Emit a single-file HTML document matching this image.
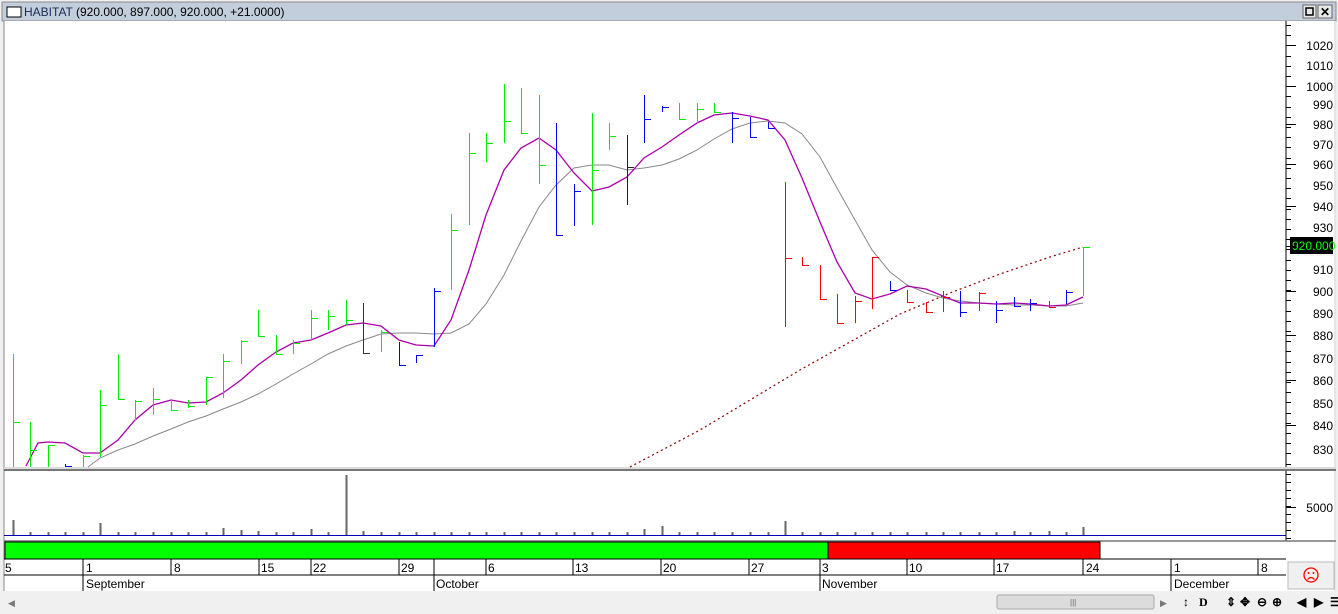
<!DOCTYPE html>
<html><head><meta charset="utf-8"><style>
body{margin:0;width:1338px;height:614px;overflow:hidden;background:#f0f0f0;font-family:"Liberation Sans",sans-serif}
svg{position:absolute;left:0;top:0}
</style></head><body>
<svg id="s" width="1338" height="614" xmlns="http://www.w3.org/2000/svg" font-family="Liberation Sans, sans-serif">
<rect x="0" y="0" width="1338" height="614" fill="#f0f0f0"/>
<rect x="2" y="2" width="1334" height="19" fill="#c2cedb" stroke="#8a8a8a"/>
<rect x="7" y="7" width="14" height="10" fill="#fff" stroke="#000"/>
<text x="24" y="16" font-size="12" fill="#1a2a5a">HABITAT <tspan fill="#000">(920.000, 897.000, 920.000, +21.0000)</tspan></text>
<rect x="1303" y="5" width="13" height="13" fill="#e8e8e8" stroke="#666"/><rect x="1306" y="8" width="7" height="7" fill="none" stroke="#000" stroke-width="1.5"/>
<rect x="1318" y="5" width="14" height="13" fill="#e8e8e8" stroke="#666"/><text x="1320" y="16" font-size="12" font-weight="bold">✕</text>
<rect x="4" y="21" width="1332" height="570" fill="#fff"/>
<line x1="4" y1="21" x2="4" y2="591" stroke="#888"/>
<line x1="1286" y1="21" x2="1286" y2="541" stroke="#000"/>
<line x1="1335" y1="21" x2="1335" y2="591" stroke="#ccc"/>
<rect x="4" y="467" width="1332" height="3" fill="#dcdcdc"/><line x1="4" y1="470" x2="1336" y2="470" stroke="#777" stroke-width="2"/>
<g font-size="12" fill="#000" text-anchor="end">
<text x="1333" y="50">1020</text><text x="1333" y="70">1010</text><text x="1333" y="91">1000</text><text x="1333" y="109">990</text><text x="1333" y="129">980</text><text x="1333" y="149">970</text><text x="1333" y="169">960</text><text x="1333" y="190">950</text><text x="1333" y="211">940</text><text x="1333" y="232">930</text><text x="1333" y="274">910</text><text x="1333" y="296">900</text><text x="1333" y="318">890</text><text x="1333" y="340">880</text><text x="1333" y="363">870</text><text x="1333" y="385">860</text><text x="1333" y="408">850</text><text x="1333" y="430">840</text><text x="1333" y="454">830</text>
<text x="1333" y="512">5000</text>
</g>
<rect x="1290" y="237" width="43" height="17" fill="#000"/><text x="1292" y="250" font-size="12" fill="#00ff00">920.000</text>
<g id="ax" stroke="#000"></g>
<line x1="4" y1="535.5" x2="1286" y2="535.5" stroke="#0000b0"/>
<g id="vol" stroke="#666" stroke-width="2"></g>
<line x1="4" y1="541" x2="1336" y2="541" stroke="#777" stroke-width="1.5"/>
<rect x="5" y="542" width="823" height="17" fill="#00ff00" stroke="#000"/>
<rect x="828" y="542" width="272" height="17" fill="#ff0000" stroke="#000"/>
<line x1="4" y1="559" x2="1286" y2="559" stroke="#000"/><line x1="4" y1="575" x2="1286" y2="575" stroke="#000"/>
<g stroke="#000"><line x1="83" y1="559" x2="83" y2="591"/><line x1="171" y1="559" x2="171" y2="575"/><line x1="259" y1="559" x2="259" y2="575"/><line x1="311" y1="559" x2="311" y2="575"/><line x1="399" y1="559" x2="399" y2="575"/><line x1="434" y1="559" x2="434" y2="591"/><line x1="486" y1="559" x2="486" y2="575"/><line x1="573" y1="559" x2="573" y2="575"/><line x1="661" y1="559" x2="661" y2="575"/><line x1="749" y1="559" x2="749" y2="575"/><line x1="820" y1="559" x2="820" y2="591"/><line x1="907" y1="559" x2="907" y2="575"/><line x1="994" y1="559" x2="994" y2="575"/><line x1="1083" y1="559" x2="1083" y2="575"/><line x1="1171" y1="559" x2="1171" y2="591"/><line x1="1258" y1="559" x2="1258" y2="575"/></g>
<g font-size="12" fill="#000">
<text x="5" y="572">5</text><text x="86" y="572">1</text><text x="174" y="572">8</text><text x="261" y="572">15</text><text x="313" y="572">22</text><text x="401" y="572">29</text><text x="488" y="572">6</text><text x="575" y="572">13</text><text x="663" y="572">20</text><text x="751" y="572">27</text><text x="822" y="572">3</text><text x="909" y="572">10</text><text x="996" y="572">17</text><text x="1086" y="572">24</text><text x="1174" y="572">1</text><text x="1261" y="572">8</text>
<text x="86" y="588">September</text><text x="436" y="588">October</text><text x="822" y="588">November</text><text x="1174" y="588">December</text>
</g>
<rect x="1288" y="562" width="46" height="27" fill="#f0f0f0" stroke="#bbb"/>
<circle cx="1311" cy="575" r="7" fill="none" stroke="#f00" stroke-width="1.3"/><circle cx="1308.5" cy="573" r="1" fill="#f00"/><circle cx="1313.5" cy="573" r="1" fill="#f00"/><path d="M1307.5 579.5 Q1311 575.5 1314.5 579.5" fill="none" stroke="#f00" stroke-width="1.2"/>
<rect x="0" y="593" width="1338" height="21" fill="#f0f0f0"/>
<text x="8" y="606" font-size="9" fill="#777">◀</text>
<rect x="997" y="595" width="157" height="14" rx="2" fill="#dcdcdc" stroke="#aaa"/><text x="1070" y="605" font-size="8" fill="#666">|||</text>
<text x="1160" y="606" font-size="9" fill="#777">▶</text>
<g font-size="12" font-weight="bold" fill="#000"><text x="1183" y="606">↕</text><text x="1199" y="606" font-family="Liberation Serif">D</text><text x="1226" y="606">⇕</text><text x="1240" y="606">✥</text><text x="1257" y="606">⊖</text><text x="1272" y="606">⊕</text><text x="1297" y="606">◀</text><text x="1314" y="606">▶</text><text x="1330" y="606">☰</text></g>
<g id="ch"></g>
</svg>
<script>
var NS="http://www.w3.org/2000/svg",ch=document.getElementById('ch');
function el(n,a,p){var e=document.createElementNS(NS,n);for(var k in a)e.setAttribute(k,a[k]);(p||ch).appendChild(e);return e}
var ax=document.getElementById('ax');
for(var y=25;y<467;y+=10.2)el('line',{x1:1286,y1:Math.round(y)+.5,x2:1291,y2:Math.round(y)+.5},ax);
[45,86,124,164,206,246,291,335,380,425].forEach(function(y){el('line',{x1:1286,y1:y+.5,x2:1296,y2:y+.5},ax)});
for(var y=474;y<540;y+=8)el('line',{x1:1286,y1:y+.5,x2:1291,y2:y+.5},ax);
el('line',{x1:1286,y1:507.5,x2:1296,y2:507.5},ax);
var G='#00ee00',B='#0000ff',R='#ff0000',K='#333';
var bars=[[13,354,470,422,G],[30,422,470,450,G],[48,445,470,445,G],[65,464,468,466,B],[83,455,470,456,G],[100,390,457,405,G],[118,354,400,399,G],[135,400,420,401,G],[153,388,415,399,G],[171,400,410,410,G],[188,400,408,406,G],[206,377,405,377,G],[223,354,398,361,G],[241,340,364,341,G],[258,310,336,336,G],[276,335,354,354,G],[293,340,354,343,G],[311,310,340,318,G],[328,310,330,316,G],[346,300,325,320,G],[363,303,353,353,K],[381,330,352,332,G],[399,342,365,365,B],[416,355,363,355,B],[434,288,347,291,B],[451,214,290,230,G],[469,133,225,153,G],[486,133,162,143,G],[504,84,143,121,G],[521,88,133,133,G],[539,95,184,165,G],[556,123,235,235,B],[574,184,226,191,B],[592,113,225,170,G],[609,123,150,136,G],[627,135,205,167,'#222'],[644,95,143,119,B],[662,106,112,107,B],[679,103,120,119,G],[697,103,123,109,G],[714,103,112,112,G],[732,112,143,118,B],[750,117,137,137,B],[768,122,128,128,B],[785,182,327,258,R],[802,257,265,265,R],[820,265,299,299,R],[837,294,323,323,R],[855,296,323,301,R],[872,257,309,257,R],[890,281,290,290,B],[907,290,302,302,R],[926,302,312,312,R],[943,291,312,297,R],[960,291,317,312,B],[979,292,311,293,R],[996,301,323,310,B],[1014,297,306,306,B],[1030,299,311,303,B],[1049,301,307,307,R],[1066,290,304,292,B],[1083,247,296,247,G]];
function pl(pts,c,w,d){el('polyline',{points:pts.map(function(p){return p.join(',')}).join(' '),fill:'none',stroke:c,'stroke-width':w,'stroke-dasharray':d||''})}
pl([[630,467],[700,430],[800,370],[900,314],[950,293],[1000,274],[1050,257],[1083,247]],'#8b0000',1.2,'2,3');
pl([[88,467],[100,458],[118,450],[135,444],[153,436],[171,429],[188,422],[206,416],[223,409],[241,402],[258,394],[276,384],[293,374],[311,364],[328,354],[346,346],[363,340],[381,334],[399,333],[416,333],[434,334],[451,333],[469,324],[486,304],[504,275],[521,241],[539,207],[556,185],[574,168],[592,165],[609,165],[627,170],[644,168],[662,165],[679,159],[697,150],[714,139],[732,129],[750,123],[768,121],[785,123],[802,134],[820,157],[837,188],[855,220],[872,250],[890,272],[907,285],[926,293],[943,298],[960,301],[979,303],[996,304],[1014,305],[1030,305],[1049,306],[1066,306],[1083,303]],'#888',1);
pl([[26,466],[38,443],[48,442],[65,443],[83,453],[100,453],[118,440],[135,420],[153,405],[171,400],[188,403],[206,402],[223,393],[241,380],[258,365],[276,352],[293,343],[311,340],[328,333],[346,325],[363,323],[381,326],[399,340],[416,345],[434,346],[451,320],[469,270],[486,215],[504,170],[521,148],[539,138],[556,150],[574,173],[592,191],[609,187],[627,177],[644,158],[662,147],[679,135],[697,123],[714,115],[732,113],[750,116],[768,120],[785,140],[802,178],[820,222],[837,262],[855,293],[872,299],[890,294],[907,286],[926,289],[943,296],[960,303],[979,303],[996,304],[1014,303],[1030,304],[1049,306],[1066,305],[1083,297]],'#aa00aa',1.3);
var vol=document.getElementById('vol');
var vh={13:15,100:12,346:60,785:14,223:7,644:6,662:9,311:6,241:5,258:4,363:4,1083:8,1014:4,1049:4};
bars.forEach(function(b){
 el('line',{x1:b[0]+.5,y1:b[1],x2:b[0]+.5,y2:Math.min(b[2],467),stroke:b[4],'stroke-width':1,'shape-rendering':'crispEdges'});
 if(b[3]<467)el('line',{x1:b[0],y1:b[3]+.5,x2:b[0]+7,y2:b[3]+.5,stroke:b[4],'stroke-width':1,'shape-rendering':'crispEdges'});
 var h=vh[b[0]]||3;el('line',{x1:b[0]+.5,y1:535-h,x2:b[0]+.5,y2:535},vol);
});
</script>
</body></html>
